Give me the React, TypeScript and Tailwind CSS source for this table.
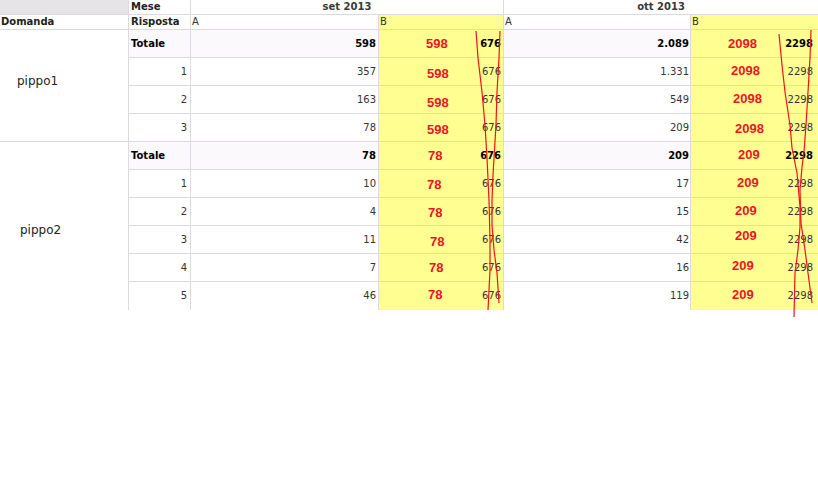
type Row = {
  r: string;
  a: string;
  b: string;
  c: string;
  oa: string;
  ob: string;
  oc: string;
  bx: number;
  by: number;
  ox: number;
  oy: number;
};

type Group = { label: string; labelClass: string; rows: Row[] };

const groups: Group[] = [
  {
    label: 'pippo1',
    labelClass: 'pb-[9px] pl-[17px]',
    rows: [
      { r: 'Totale', a: '598', b: '598', c: '676', oa: '2.089', ob: '2098', oc: '2298', bx: 426, by: 0, ox: 728, oy: 0 },
      { r: '1', a: '357', b: '598', c: '676', oa: '1.331', ob: '2098', oc: '2298', bx: 427, by: 2, ox: 731, oy: -1 },
      { r: '2', a: '163', b: '598', c: '676', oa: '549', ob: '2098', oc: '2298', bx: 427, by: 3, ox: 733, oy: -1 },
      { r: '3', a: '78', b: '598', c: '676', oa: '209', ob: '2098', oc: '2298', bx: 427, by: 2, ox: 735, oy: 1 },
    ],
  },
  {
    label: 'pippo2',
    labelClass: 'pt-[7px] pl-[20px]',
    rows: [
      { r: 'Totale', a: '78', b: '78', c: '676', oa: '209', ob: '209', oc: '2298', bx: 428, by: 0, ox: 738, oy: -1 },
      { r: '1', a: '10', b: '78', c: '676', oa: '17', ob: '209', oc: '2298', bx: 427, by: 1, ox: 737, oy: -1 },
      { r: '2', a: '4', b: '78', c: '676', oa: '15', ob: '209', oc: '2298', bx: 428, by: 1, ox: 735, oy: -1 },
      { r: '3', a: '11', b: '78', c: '676', oa: '42', ob: '209', oc: '2298', bx: 430, by: 2, ox: 735, oy: -4 },
      { r: '4', a: '7', b: '78', c: '676', oa: '16', ob: '209', oc: '2298', bx: 429, by: 0, ox: 732, oy: -2 },
      { r: '5', a: '46', b: '78', c: '676', oa: '119', ob: '209', oc: '2298', bx: 428, by: -2, ox: 732, oy: -2 },
    ],
  },
];

const red = "font-['Liberation_Sans',sans-serif] text-[13px] font-bold text-[#ec1327] leading-none";

function DataRow({ row, last }: { row: Row; last: boolean }) {
  const tot = row.r === 'Totale';
  const shade = tot ? 'bg-[#fbf9fc]' : 'bg-white';
  const num = tot ? 'font-bold text-black' : 'text-[#333]';
  return (
    <div className={`flex h-[28px] ${last ? '' : 'border-b border-[#dcdadf]'}`}>
      <div
        className={`w-[62px] flex items-center border-r border-[#dcdadf] ${shade} ${
          tot ? 'pl-[2px] font-bold text-black' : 'justify-end pr-[3px] text-[#333]'
        }`}>
        {row.r}
      </div>
      <div className={`w-[188px] flex items-center justify-end pr-[2px] border-r border-[#dcdadf] ${shade} ${num}`}>
        {row.a}
      </div>
      <div className="w-[125px] flex items-center border-r border-[#dcdadf] bg-[#ffff91]">
        <span className={red} style={{ marginLeft: row.bx - 379, transform: `translateY(${row.by}px)` }}>
          {row.b}
        </span>
        <span className={`ml-auto pr-[2px] ${num}`}>{row.c}</span>
      </div>
      <div className={`w-[187px] flex items-center justify-end pr-[1px] border-r border-[#dcdadf] ${shade} ${num}`}>
        {row.oa}
      </div>
      <div className="w-[127px] flex items-center bg-[#ffff91]">
        <span className={red} style={{ marginLeft: row.ox - 691, transform: `translateY(${row.oy}px)` }}>
          {row.ob}
        </span>
        <span className={`ml-auto pr-[5px] ${num}`}>{row.oc}</span>
      </div>
    </div>
  );
}

export default function App() {
  return (
    <div className="relative w-[818px] h-[491px] bg-white font-['DejaVu_Sans',sans-serif] text-[10px] leading-none text-[#333]">
      <div className="flex h-[15px] border-b border-[#dcdadf]">
        <div className="w-[129px] bg-[#e6e4e7] border-r border-[#dcdadf]" />
        <div className="w-[62px] flex items-center pl-[2px] font-bold text-[#222] border-r border-[#dcdadf]">Mese</div>
        <div className="w-[313px] flex items-center justify-center font-bold text-[#3a3a3a] border-r border-[#dcdadf]">
          set 2013
        </div>
        <div className="flex-1 flex items-center justify-center font-bold text-[#3a3a3a]">ott 2013</div>
      </div>
      <div className="flex h-[15px] border-b border-[#dcdadf]">
        <div className="w-[129px] flex items-center pl-[1px] font-bold text-[#222] border-r border-[#dcdadf]">Domanda</div>
        <div className="w-[62px] flex items-center pl-[2px] font-bold text-[#222] border-r border-[#dcdadf]">Risposta</div>
        <div className="w-[188px] flex items-center pl-[1px] border-r border-[#dcdadf]">A</div>
        <div className="w-[125px] flex items-center pl-[1px] bg-[#ffff91] border-r border-[#dcdadf]">B</div>
        <div className="w-[187px] flex items-center pl-[1px] border-r border-[#dcdadf]">A</div>
        <div className="flex-1 flex items-center pl-[1px] bg-[#ffff91]">B</div>
      </div>
      {groups.map((g, gi) => {
        const lastGroup = gi === groups.length - 1;
        return (
          <div key={g.label} className="flex">
            <div
              className={`w-[129px] flex items-center text-[12px] text-[#222] border-r border-[#dcdadf] ${g.labelClass} ${
                lastGroup ? '' : 'border-b'
              }`}>
              {g.label}
            </div>
            <div className="flex flex-col">
              {g.rows.map((row, ri) => (
                <DataRow key={ri} row={row} last={lastGroup && ri === g.rows.length - 1} />
              ))}
            </div>
          </div>
        );
      })}

      <svg className="absolute inset-0 pointer-events-none" width="818" height="491" viewBox="0 0 818 491">
        <g fill="none" stroke="#f01020" strokeWidth="1.2">
          <polyline points="476,31 478,58 482,92 485,125 487,158 489,200 490,240 490,270 488,310" />
          <polyline points="500,31 499,58 497,92 496,125 494,158 493,175 492,200 492,225 494,250 497,273 499,303" />
          <polyline points="779,34 782,65 785,92 790,125 792,148 797,173 800,207 800,227 798,250 795,273 794,317" />
          <polyline points="811,30 810,58 808,92 806,125 804,152 802,167 800,190 801,223 805,250 808,273 812,303" />
        </g>
      </svg>
    </div>
  );
}
